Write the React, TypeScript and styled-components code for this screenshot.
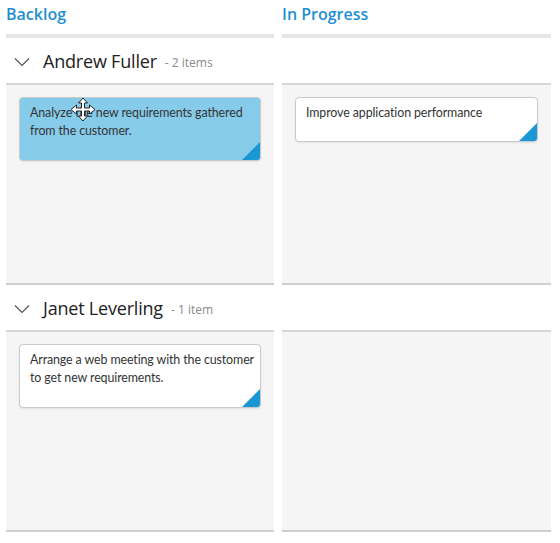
import React from "react";
import styled, { createGlobalStyle } from "styled-components";

interface Card {
  id: number;
  text: string;
  selected?: boolean;
}

interface Lane {
  name: string;
  count: string;
  backlog: Card[];
  progress: Card[];
}

const lanes: Lane[] = [
  {
    name: "Andrew Fuller",
    count: "- 2 items",
    backlog: [{ id: 1, text: "Analyze the new requirements gathered from the customer.", selected: true }],
    progress: [{ id: 2, text: "Improve application performance" }],
  },
  {
    name: "Janet Leverling",
    count: "- 1 item",
    backlog: [{ id: 3, text: "Arrange a web meeting with the customer to get new requirements." }],
    progress: [],
  },
];

const GlobalStyle = createGlobalStyle`
  body {
    margin: 0;
    background: #fff;
    font-family: "Open Sans", "Noto Sans", sans-serif;
  }
`;

const Board = styled.div`
  width: 545px;
  padding-left: 6px;
`;

const Columns = styled.div`
  display: grid;
  grid-template-columns: 268px 269px;
  column-gap: 8px;
`;

const ColumnHead = styled.div`
  height: 38px;
  box-sizing: border-box;
  padding-top: 2px;
  border-bottom: 4px solid #e6e6e6;
  color: #1f8fd1;
  font-size: 16px;
  font-weight: 600;
  line-height: 24px;
`;

const LaneHeader = styled.div`
  display: flex;
  align-items: center;
  height: 45px;
  padding-left: 8px;
`;

const Chevron = styled.svg`
  width: 16px;
  height: 10px;
  margin-right: 13px;
  margin-top: 2px;
`;

const LaneName = styled.span`
  font-size: 18px;
  font-weight: 500;
  color: #222;
  letter-spacing: -0.2px;
`;

const LaneCount = styled.span`
  font-size: 12px;
  color: #8a8a8a;
  margin-left: 8px;
  margin-top: 4px;
`;

const Cell = styled.div`
  background: #f5f5f5;
  border-top: 2px solid #d6d6d6;
  border-bottom: 2px solid #cfcfcf;
  padding: 12px 13px 0 13px;
  height: 186px;
`;

const CardBox = styled.div<{ $selected?: boolean }>`
  position: relative;
  min-height: 63px;
  box-sizing: border-box;
  background: ${(p) => (p.$selected ? "#87cbea" : "#fff")};
  border: 1px solid #c9c9c9;
  border-radius: 4px;
  box-shadow: 0 1px 2px rgba(0, 0, 0, 0.08);
  padding: 6px 2px 20px 10px;
  font-family: Lato, "Open Sans", sans-serif;
  font-size: 12.4px;
  letter-spacing: -0.1px;
  line-height: 18px;
  color: #333;
  overflow: hidden;

  &.short {
    min-height: 45px;
    padding-bottom: 8px;
  }
`;

const Corner = styled.div`
  position: absolute;
  right: 0;
  bottom: 0;
  width: 0;
  height: 0;
  border-left: 18px solid transparent;
  border-bottom: 18px solid #1a97d5;
`;

const MoveCursor = styled.svg`
  position: absolute;
  left: 50px;
  top: -1px;
  width: 26px;
  height: 25px;
`;

const ChevronIcon = () => (
  <Chevron viewBox="0 0 16 10">
    <path d="M1 1.5 L8 8.5 L15 1.5" fill="none" stroke="#555" strokeWidth="1.2" />
  </Chevron>
);

const Move = () => (
  <MoveCursor viewBox="0 0 26 25">
    <path
      d="M13 1 L17.5 6 L14.5 6 L14.5 11 L19.5 11 L19.5 8 L25 12.5 L19.5 17 L19.5 14 L14.5 14 L14.5 19 L17.5 19 L13 24 L8.5 19 L11.5 19 L11.5 14 L6.5 14 L6.5 17 L1 12.5 L6.5 8 L6.5 11 L11.5 11 L11.5 6 L8.5 6 Z"
      fill="#fff"
      stroke="#222"
      strokeWidth="1"
      strokeLinejoin="round"
    />
  </MoveCursor>
);

const KanbanCard = ({ card }: { card: Card }) => {
  const short = card.text.length < 40;
  return (
    <CardBox $selected={card.selected} className={short ? "short" : undefined}>
      {card.text}
      {card.selected && <Move />}
      <Corner />
    </CardBox>
  );
};

const App = (): JSX.Element => (
  <>
    <GlobalStyle />
    <Board>
      <Columns>
        <ColumnHead>Backlog</ColumnHead>
        <ColumnHead>In Progress</ColumnHead>
      </Columns>
      {lanes.map((lane) => (
        <div key={lane.name}>
          <LaneHeader>
            <ChevronIcon />
            <LaneName>{lane.name}</LaneName>
            <LaneCount>{lane.count}</LaneCount>
          </LaneHeader>
          <Columns>
            <Cell>
              {lane.backlog.map((c) => (
                <KanbanCard key={c.id} card={c} />
              ))}
            </Cell>
            <Cell>
              {lane.progress.map((c) => (
                <KanbanCard key={c.id} card={c} />
              ))}
            </Cell>
          </Columns>
        </div>
      ))}
    </Board>
  </>
);

export default App;
